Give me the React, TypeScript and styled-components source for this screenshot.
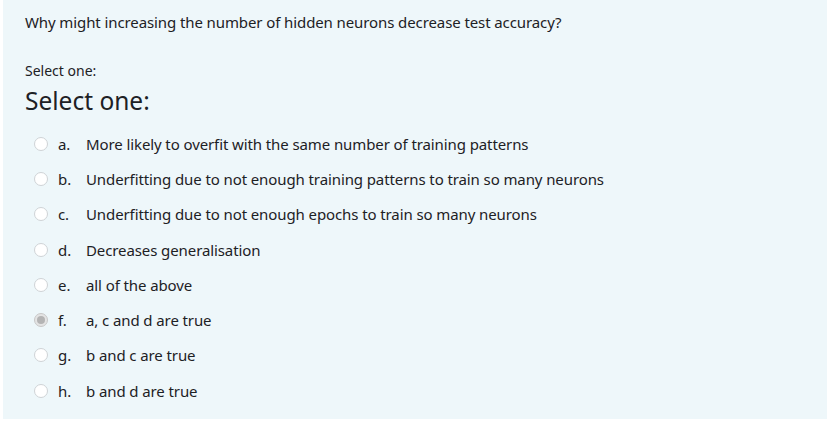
import React from 'react';
import styled, { createGlobalStyle } from 'styled-components';

const GlobalStyle = createGlobalStyle`
  html, body {
    margin: 0;
    padding: 0;
    background: #fff;
  }
  body {
    font-family: "Noto Sans", "Open Sans", sans-serif;
    color: #1d2125;
  }
`;

const Page = styled.div`
  width: 827px;
  height: 421px;
  box-sizing: border-box;
  padding: 0 0 2px 3px;
`;

const Formulation = styled.div`
  height: 100%;
  box-sizing: border-box;
  background: #eef7fa;
  padding: 12px 22px;
`;

const QuestionText = styled.p`
  margin: 0;
  font-size: 15px;
  letter-spacing: -0.1px;
  line-height: 21px;
`;

const Prompt = styled.div`
  margin-top: 28px;
  font-size: 14px;
  line-height: 20px;
`;

const Legend = styled.h3`
  margin: 5px 0 0;
  font-size: 24.5px;
  font-weight: 400;
  line-height: 30px;
`;

const Answers = styled.div`
  margin-top: 10px;
  display: flex;
  flex-direction: column;
`;

const Option = styled.label`
  display: flex;
  align-items: center;
  height: 35.3px;
  padding-left: 9px;
  font-size: 15px;
  letter-spacing: -0.1px;
`;

const Radio = styled.span<{ checked?: boolean }>`
  width: 14px;
  height: 14px;
  box-sizing: border-box;
  border-radius: 50%;
  border: 1px solid ${p => (p.checked ? '#c8c8c8' : '#cfd3d6')};
  background: ${p => (p.checked ? '#e4e4e4' : '#fff')};
  display: flex;
  align-items: center;
  justify-content: center;
  margin-right: 10px;

  &::after {
    content: '';
    display: ${p => (p.checked ? 'block' : 'none')};
    width: 8px;
    height: 8px;
    border-radius: 50%;
    background: #b4b4b4;
  }
`;

const Letter = styled.span`
  width: 28px;
`;

const options = [
  'More likely to overfit with the same number of training patterns',
  'Underfitting due to not enough training patterns to train so many neurons',
  'Underfitting due to not enough epochs to train so many neurons',
  'Decreases generalisation',
  'all of the above',
  'a, c and d are true',
  'b and c are true',
  'b and d are true',
];

const App: React.FC = () => {
  return (
    <>
      <GlobalStyle />
      <Page>
        <Formulation>
          <QuestionText>
            Why might increasing the number of hidden neurons decrease test accuracy?
          </QuestionText>
          <Prompt>Select one:</Prompt>
          <Legend>Select one:</Legend>
          <Answers>
            {options.map((text, i) => (
              <Option key={i}>
                <Radio checked={i === 5} />
                <Letter>{String.fromCharCode(97 + i)}.</Letter>
                <span>{text}</span>
              </Option>
            ))}
          </Answers>
        </Formulation>
      </Page>
    </>
  );
};

export default App;
